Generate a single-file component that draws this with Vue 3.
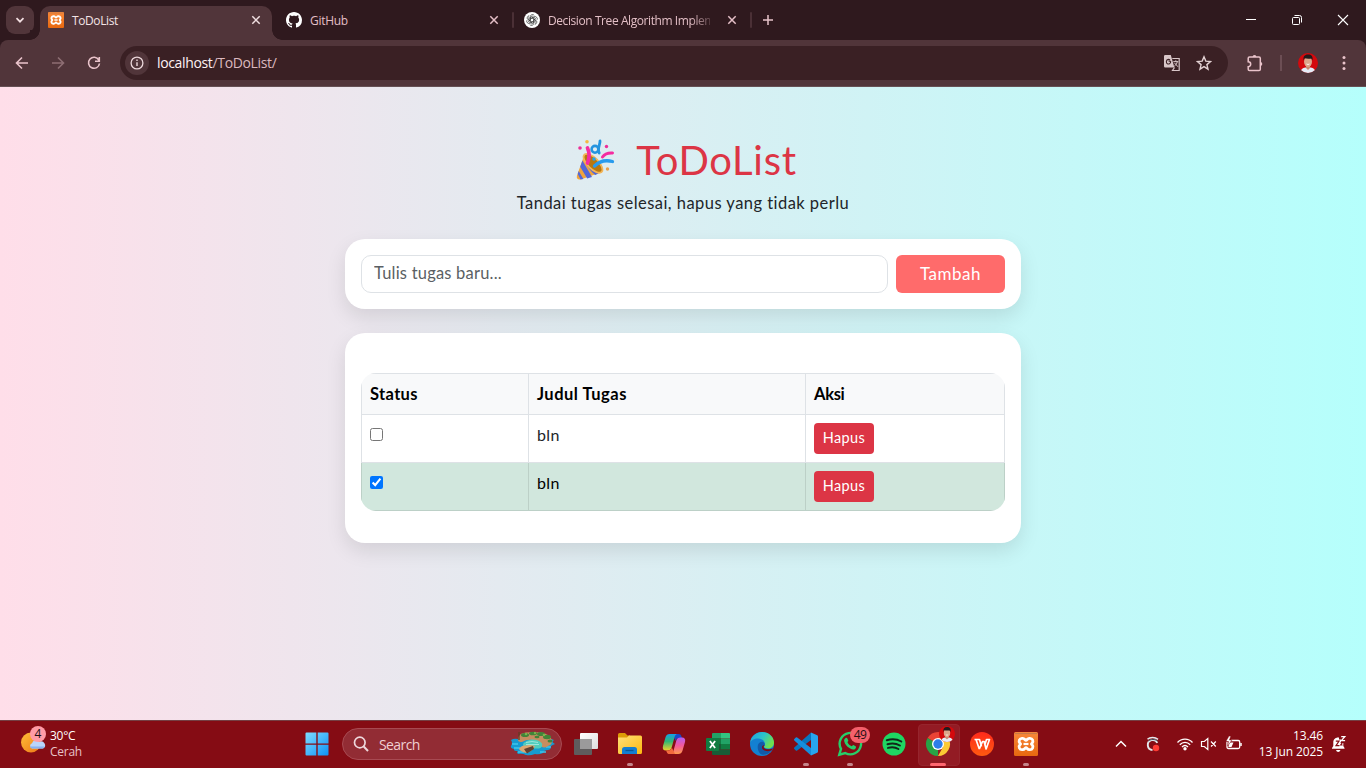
<script setup>
import { ref } from 'vue'

const draft = ref('')
const tasks = ref([
  { id: 1, title: 'bln', done: false },
  { id: 2, title: 'bln', done: true },
])
const remove = (id) => { tasks.value = tasks.value.filter((t) => t.id !== id) }
</script>

<template>
  <div class="screen">
    <svg class="defs" width="0" height="0">
      <defs>
        <linearGradient id="gWin" x1="0" y1="0" x2="1" y2="1"><stop offset="0" stop-color="#7fdcff" /><stop offset="1" stop-color="#0d92f5" /></linearGradient>
        <linearGradient id="gXampp" x1="0" y1="0" x2="0" y2="1"><stop offset="0" stop-color="#f9883a" /><stop offset="1" stop-color="#e8680f" /></linearGradient>
        <linearGradient id="gFolder" x1="0" y1="0" x2="1" y2="1"><stop offset="0" stop-color="#ffe07a" /><stop offset="1" stop-color="#fdb90f" /></linearGradient>
        <linearGradient id="gCopA" x1="0" y1="0" x2="0" y2="1"><stop offset="0" stop-color="#169fe6" /><stop offset=".45" stop-color="#2fb774" /><stop offset="1" stop-color="#f3d02c" /></linearGradient>
        <linearGradient id="gCopB" x1="0" y1="0" x2="0" y2="1"><stop offset="0" stop-color="#b65bf0" /><stop offset=".5" stop-color="#f3599b" /><stop offset="1" stop-color="#ff9a4b" /></linearGradient>
        <linearGradient id="gEdge" x1="0" y1="0" x2="1" y2=".5"><stop offset="0" stop-color="#1e9de4" /><stop offset=".55" stop-color="#2cc4c9" /><stop offset="1" stop-color="#6fe04d" /></linearGradient>
        <linearGradient id="gSun" x1="0" y1="0" x2="1" y2="1"><stop offset="0" stop-color="#ffbf38" /><stop offset="1" stop-color="#ee7617" /></linearGradient>
        <linearGradient id="gWps" x1="0" y1="0" x2="0" y2="1"><stop offset="0" stop-color="#ff2a1c" /><stop offset="1" stop-color="#ff5a10" /></linearGradient>
        <clipPath id="round20"><circle cx="10" cy="10" r="10" /></clipPath>
        <symbol id="xampp" viewBox="0 0 24 24">
          <rect width="24" height="24" rx="1.5" fill="url(#gXampp)" />
          <path d="M1 1.5h22" stroke="#c87a45" stroke-width="1.2" />
          <path d="M8 6.300h.8c1.800 0 2.200 2 3.200 2s1.400-2 3.200-2h.8a2.900 2.900 0 0 1 2.100 4.900l-.7.8.7.8a2.900 2.900 0 0 1-2.100 4.900h-.8c-1.800 0-2.200-2-3.200-2s-1.400 2-3.200 2H8a2.900 2.900 0 0 1-2.100-4.900l.7-.8-.7-.8A2.900 2.900 0 0 1 8 6.300z" fill="none" stroke="#fff" stroke-width="2.800" stroke-linejoin="round" />
          <path d="M9.500 12h5" stroke="#fff" stroke-width="2.200" />
        </symbol>
        <symbol id="face" viewBox="0 0 20 20">
          <g clip-path="url(#round20)">
            <rect width="20" height="20" fill="#d4090d" />
            <path d="M2.500 20c.3-4 2-5 4.800-5.600h5.400c2.800.6 4.500 1.600 4.800 5.600z" fill="#e6edf8" />
            <path d="M8 12h4v3l-2 2-2-2z" fill="#c98d70" />
            <ellipse cx="10" cy="8.800" rx="4" ry="5.200" fill="#dca68a" />
            <path d="M5.600 7.500C4.900 3.500 6.500 1.400 10 1.400s5.200 1.800 4.500 6.100l-1-2c-2 .3-5 .3-7-.2z" fill="#231b1c" />
            <path d="M8.500 11q1.500 1 3 0" stroke="#fff" stroke-width=".9" fill="none" />
          </g>
        </symbol>
      </defs>
    </svg>

    <header class="tabs">
      <button class="tabsearch"><svg width="10" height="10" viewBox="0 0 10 10"><path d="M1.500 3.200 5 6.700l3.500-3.500" fill="none" stroke="#f3dfe2" stroke-width="1.700" /></svg></button>
      <div class="tab active">
        <svg class="fav" width="16" height="16"><use href="#xampp" /></svg>
        <span class="title t1">ToDoList</span>
        <svg class="x" width="10" height="10" viewBox="0 0 10 10"><path d="M1.300 1.300l7.400 7.400M8.700 1.300 1.300 8.700" stroke="#f0dfe1" stroke-width="1.500" /></svg>
      </div>
      <div class="tab">
        <svg class="fav" width="16" height="16" viewBox="0 0 16 16"><path fill="#fff" d="M8 0C3.580 0 0 3.580 0 8c0 3.540 2.290 6.530 5.470 7.590.4.070.55-.17.55-.38 0-.19-.01-.82-.01-1.490-2.010.37-2.530-.49-2.690-.94-.09-.23-.48-.94-.82-1.130-.28-.15-.68-.52-.01-.53.63-.01 1.080.58 1.230.82.72 1.210 1.870.87 2.330.66.07-.52.28-.87.51-1.070-1.780-.2-3.640-.89-3.640-3.950 0-.87.31-1.590.82-2.150-.08-.2-.36-1.020.08-2.120 0 0 .67-.21 2.200.82.64-.18 1.320-.27 2-.27s1.360.09 2 .27c1.530-1.040 2.200-.82 2.200-.82.44 1.100.16 1.920.08 2.120.51.56.82 1.270.82 2.150 0 3.070-1.870 3.750-3.650 3.950.29.25.54.73.54 1.480 0 1.070-.01 1.930-.01 2.200 0 .21.15.46.55.38A8.010 8.010 0 0 0 16 8c0-4.420-3.580-8-8-8z" /></svg>
        <span class="title t2">GitHub</span>
        <svg class="x" width="10" height="10" viewBox="0 0 10 10"><path d="M1.300 1.300l7.400 7.400M8.700 1.300 1.300 8.700" stroke="#e5bfc7" stroke-width="1.500" /></svg>
      </div>
      <i class="sep"></i>
      <div class="tab">
        <svg class="fav" width="16" height="16" viewBox="0 0 16 16">
          <circle cx="8" cy="8" r="8" fill="#fff" />
          <g fill="none" stroke="#333" stroke-width=".7"><g v-for="n in 6" :key="n" :transform="`rotate(${n * 60} 8 8)`"><path d="M6.300 8V4.600A2.200 2.200 0 0 1 10.300 3.500M6.300 6.900l3-1.700 2.600 1.500" /></g></g>
        </svg>
        <span class="title t3">Decision Tree Algorithm Implem</span>
        <svg class="x" width="10" height="10" viewBox="0 0 10 10"><path d="M1.300 1.300l7.400 7.400M8.700 1.300 1.300 8.700" stroke="#e5bfc7" stroke-width="1.500" /></svg>
      </div>
      <i class="sep"></i>
      <svg class="plus" width="12" height="12" viewBox="0 0 12 12"><path d="M6 1v10M1 6h10" stroke="#e8c3ca" stroke-width="1.500" /></svg>
      <div class="winctl">
        <svg width="12" height="12" viewBox="0 0 12 12"><path d="M1 5.500h10" stroke="#fff" /></svg>
        <svg width="12" height="12" viewBox="0 0 12 12"><path d="M3.500 1.500h5a2 2 0 0 1 2 2v5" fill="none" stroke="#fff" /><rect x="1.500" y="3.500" width="7" height="7" rx="1" fill="none" stroke="#fff" /></svg>
        <svg width="12" height="12" viewBox="0 0 12 12"><path d="M1 1l10 10M11 1 1 11" stroke="#fff" stroke-width="1.100" /></svg>
      </div>
    </header>

    <nav class="toolbar">
      <svg class="nav" width="16" height="16" viewBox="0 0 16 16"><path d="M14 8H2.800M8 2.500 2.500 8 8 13.500" fill="none" stroke="#eac4cb" stroke-width="1.600" /></svg>
      <svg class="nav" width="16" height="16" viewBox="0 0 16 16"><path d="M2 8h11.200M8 2.500 13.500 8 8 13.500" fill="none" stroke="#8e6e73" stroke-width="1.600" /></svg>
      <svg class="nav" width="16" height="16" viewBox="0 0 16 16"><path d="M12.800 5A5.500 5.500 0 1 0 13.500 8.500M13.300 2v4.200H9" fill="none" stroke="#eac4cb" stroke-width="1.600" /></svg>
      <div class="omni">
        <span class="info"><svg width="14" height="14" viewBox="0 0 14 14"><circle cx="7" cy="7" r="5.900" fill="none" stroke="#ecd8db" stroke-width="1.300" /><path d="M7 6.200V10M7 3.600v1.500" stroke="#ecd8db" stroke-width="1.400" /></svg></span>
        <span class="url">localhost<em>/ToDoList/</em></span>
        <svg class="translate" width="18" height="18" viewBox="0 0 18 18">
          <path d="M2.200 1h5.600l3.600 12.500H2.200A1.200 1.200 0 0 1 1 12.300V2.200A1.200 1.200 0 0 1 2.200 1z" fill="#d8c6c8" />
          <path d="M7.900 7.200H5.600M7.700 7.200c0 2.500-1.800 3.200-3 2.700-2.100-.9-1.600-4.400.6-4.500.8 0 1.300.2 1.700.7" fill="none" stroke="#3b2024" stroke-width="1.100" />
          <path d="M9.300 4.500h6.900v12H9.500l2-3" fill="none" stroke="#d8c6c8" stroke-width="1.200" />
          <path d="M10.300 7.600h5M12.800 6.300v1.300M14.300 7.700c-.4 2-1.500 3.400-3 4.500M11.400 8.800l3.600 4" fill="none" stroke="#d8c6c8" stroke-width="1" />
        </svg>
        <svg class="star" width="16" height="16" viewBox="0 0 16 16"><path d="M8 1.800l1.800 4.300 4.700.4-3.600 3.100 1.100 4.600-4-2.500-4 2.500 1.100-4.600L1.500 6.500l4.700-.4z" fill="none" stroke="#e3d1d3" stroke-width="1.400" /></svg>
      </div>
      <svg class="puzzle" width="18" height="18" viewBox="0 0 18 18"><path d="M2.200 4.300q0-1.300 1.300-1.300H13q1.300 0 1.300 1.300v10.900q0 1.300-1.300 1.300H3.500q-1.300 0-1.300-1.300v-2.400a2.500 2.500 0 0 0 0-5z" fill="none" stroke="#eac4cb" stroke-width="1.500" /><path d="M6.600 3a1.900 1.900 0 0 1 3.800 0zM14.400 8a1.900 1.900 0 0 1 0 3.800z" fill="#eac4cb" /></svg>
      <i class="tsep"></i>
      <svg class="avatar" width="20" height="20"><use href="#face" /></svg>
      <svg class="dots" width="4" height="16" viewBox="0 0 4 16"><g fill="#eac4cb"><circle cx="2" cy="2.500" r="1.500" /><circle cx="2" cy="8" r="1.500" /><circle cx="2" cy="13.500" r="1.500" /></g></svg>
    </nav>

    <main class="page">
      <h1>
        <svg width="40" height="42" viewBox="0 0 40 42">
          <path d="M8.500 15.500 1 36.500c-.9 3 .9 4.600 3.600 4L26 33z" fill="#f1a43c" />
          <path d="M6.400 21.500 16 38l-4.800 1.500L4.200 27.700zM2.700 32l4.700 8-2.800.6L1.700 35zM9 16c2 6 7 13.500 13.500 18.400l-3.300 1.500C13.500 31.600 9.500 25.500 7.700 19.300z" fill="#5267d8" />
          <ellipse cx="17" cy="24.300" rx="12.200" ry="5.400" transform="rotate(45 17 24.300)" fill="#b8780f" />
          <ellipse cx="17" cy="24.300" rx="12.200" ry="5.400" transform="rotate(45 17 24.300)" fill="none" stroke="#f3b558" stroke-width="1.800" />
          <path d="M11.500 24c2-5 2.300-10 0-15" fill="none" stroke="#f52ca0" stroke-width="3.700" stroke-linecap="round" />
          <path d="M18.500 27c4.500-4.500 10-6.500 18-4.500" fill="none" stroke="#289bed" stroke-width="3.300" stroke-linecap="round" />
          <path d="M26.500 18c1.800-2.800 5-4.300 10-4" fill="none" stroke="#f52ca0" stroke-width="3" stroke-linecap="round" />
          <circle cx="19" cy="10.300" r="3.400" fill="none" stroke="#2494df" stroke-width="2.600" /><path d="M24 2c.2 3.500-3 8-.8 12" fill="none" stroke="#2494df" stroke-width="2.800" stroke-linecap="round" />
          <g fill="#ed2f98"><circle cx="4" cy="9" r="1.800" /><circle cx="30.500" cy="7.500" r="1.700" /></g>
          <circle cx="11" cy="2.800" r="1.800" fill="#f5b744" /><circle cx="31.500" cy="30" r="1.700" fill="#e9a04c" /><circle cx="18" cy="20" r="1.700" fill="#22a5ee" />
        </svg>
        <span>ToDoList</span>
      </h1>
      <p class="lead">Tandai tugas selesai, hapus yang tidak perlu</p>

      <section class="card form">
        <input v-model="draft" placeholder="Tulis tugas baru..." />
        <button class="add">Tambah</button>
      </section>

      <section class="card list">
        <table>
          <thead><tr><th>Status</th><th>Judul Tugas</th><th>Aksi</th></tr></thead>
          <tbody>
            <tr v-for="t in tasks" :key="t.id" :class="{ done: t.done }">
              <td><input v-model="t.done" type="checkbox" /></td>
              <td>{{ t.title }}</td>
              <td><button class="del" @click="remove(t.id)">Hapus</button></td>
            </tr>
          </tbody>
        </table>
      </section>
    </main>

    <footer class="taskbar">
      <div class="weather">
        <svg width="28" height="30" viewBox="0 0 28 30">
          <circle cx="11" cy="17.500" r="10" fill="url(#gSun)" />
          <path d="M12 23.500a2.800 2.800 0 0 1 0-5.300 4 4 0 0 1 7.200-1.200 3.300 3.300 0 0 1 4 6.500z" fill="#b9d4fa" /><path d="M12 23.500a2.800 2.800 0 0 1-2-2h14.500a3 3 0 0 1-2 2z" fill="#87b0ee" />
          <circle cx="18" cy="9" r="8" fill="#ff9ba6" />
        </svg>
        <b class="four">4</b>
        <div class="wtext"><span>30°C</span><span class="dim">Cerah</span></div>
      </div>
      <div class="apps">
        <div class="app"><svg width="24" height="24" viewBox="0 0 24 24"><path d="M.5 1.500q0-1 1-1h9.800v10.900H.5zM12.700.5h9.800q1 0 1 1v9.900H12.700zM.5 12.700h10.800v10.800H1.500q-1 0-1-1zM12.700 12.700h10.800v9.800q0 1-1 1h-9.800z" fill="url(#gWin)" /></svg></div>
        <div class="search">
          <svg width="16" height="16" viewBox="0 0 16 16"><circle cx="6.800" cy="6.500" r="5.300" fill="none" stroke="#eed8dc" stroke-width="1.700" /><path d="M10.700 10.500 15 15" stroke="#eed8dc" stroke-width="2" /></svg>
          <span>Search</span>
          <svg class="island" width="48" height="26" viewBox="0 0 48 26">
            <path d="M2 9q3-2 7-1h28q4-1 8 1-3 2 1 4-3 1-5 3 2 2-2 3-4 0-5 3-4 2-8 1-5 2-9 1-4-2-8-1-2-2 0-3-5 0-4-2-4-1-3-3 2-3 0-6z" fill="#159bd1" />
            <path d="M3 13h6M5 17h6M31 21h6M37 16h5M9 21h6" stroke="#3cc6eb" stroke-width="1.500" />
            <path d="M9 9q0-5 4-6.500 6-2 12-1 8-1 12 1.500 5 2 6 7 0 4-4 5-4 3-7 0-1-5-8-6-6-1-11 2-4 0-4-2z" fill="#c68d60" />
            <path d="M14 13q3-4 9-4.500 7 0 10 4 1 4-3 5H18q-4-1-4-4.500z" fill="#50cdbd" />
            <path d="M17 11.500q6-2 12 0M17 13.500h13" stroke="#9be6dc" stroke-width="1" fill="none" />
            <path d="M10 18q2-4 7-3.500 4-1 9 .5-2 5-8 7-6-1-8-4z" fill="#dba771" /><path d="M15 18l9-3 1 3-7 4.500z" fill="#5e4132" />
            <g fill="#418438"><ellipse cx="16" cy="4" rx="4" ry="2" /><ellipse cx="24" cy="2.500" rx="4" ry="1.800" /><ellipse cx="32" cy="3" rx="4" ry="2" /><ellipse cx="38" cy="6" rx="4" ry="2.200" /><ellipse cx="28" cy="6" rx="2.500" ry="1.300" /><ellipse cx="41" cy="10" rx="2.500" ry="1.500" /></g>
            <g fill="#77b44c"><circle cx="17" cy="3" r="1.300" /><circle cx="26" cy="2" r="1.200" /><circle cx="35" cy="4" r="1.300" /></g>
            <path d="M10 1v8" stroke="#613c22" stroke-width="1.300" />
          </svg>
        </div>
        <div class="app"><svg width="26" height="24" viewBox="0 0 26 24"><defs><linearGradient id="gTv" x1="0" y1="0" x2="1" y2="1"><stop offset="0" stop-color="#fff" /><stop offset="1" stop-color="#ddd" /></linearGradient></defs><rect x="1" y="7" width="18" height="16" rx="1" fill="#5f5c5d" /><rect x="7" y="1" width="18" height="16" rx="1" fill="url(#gTv)" /><path d="M7 7h12v10H7z" fill="#9b9a9b" /></svg></div>
        <div class="app run"><svg width="24" height="24" viewBox="0 0 24 24"><path d="M0 2.500Q0 1 1.500 1H7l2.500 2.500H12V8H0z" fill="#dd9b07" /><path d="M0 5.500h9l2-2h11.500Q24 3.500 24 5v15.500q0 1.500-1.500 1.500h-21Q0 22 0 20.500z" fill="url(#gFolder)" /><path d="M4 22v-4.500Q4 15 6.500 15h10q2.500 0 2.500 2.500V22z" fill="#147ed1" /><path d="M7.500 18.500h8" stroke="#0b5695" stroke-width="1.300" /></svg></div>
        <div class="app"><svg width="24" height="24" viewBox="0 0 24 24">
          <path d="M11 2h5.500c1.600 0 2.400.8 2.900 2.300L20 6h-3c-2 0-3 1-3.600 3z" fill="#1848c9" />
          <path d="M7.700 2H15c-1.400.5-2 1.500-2.500 3.200L9.800 15c-.7 2.600-2 3.500-4.300 3.500H4c-2.500 0-3.800-1.500-3-4.600L3.600 5C4.300 2.900 5.500 2 7.700 2z" fill="url(#gCopA)" />
          <path d="M16.300 22H9c1.400-.5 2-1.500 2.500-3.200L14.200 9c.7-2.600 2-3.500 4.300-3.500H20c2.500 0 3.800 1.500 3 4.600L20.400 19c-.7 2.100-1.900 3-4.100 3z" fill="url(#gCopB)" />
          <path d="M13 22H7.500c-1.600 0-2.400-.8-2.900-2.300L4.200 18.500h2c2 0 3-1 3.600-3z" fill="#f46a3d" />
        </svg></div>
        <div class="app"><svg class="xl" width="24" height="24" viewBox="0 0 24 24"><path d="M6 2q0-1 1-1h8v5.500H6z" fill="#21a366" /><path d="M15 1h8q1 0 1 1v4.500h-9z" fill="#33c481" /><path d="M6 6.500h9V12H6z" fill="#107c41" /><path d="M15 6.500h9V12h-9z" fill="#21a366" /><path d="M6 12h9v5.500H6z" fill="#185c37" /><path d="M15 12h9v5.500h-9z" fill="#107c41" /><path d="M6 17.500h18V22q0 1-1 1H7q-1 0-1-1z" fill="#185c37" /><rect y="6" width="13" height="13" rx="1" fill="#107c41" /><path d="M3.900 9l5.200 7M9.100 9l-5.200 7" stroke="#fff" stroke-width="1.800" /></svg></div>
        <div class="app"><svg width="26" height="26" viewBox="0 0 26 26">
          <circle cx="13" cy="13" r="12" fill="#1380d1" />
          <path d="M1 12C2 5 7 1 13 1c7 0 12 5 12 10.500 0 4-3 6-6 6-2.300 0-4-.7-4-1.700 0-.7 1-1.100 1-2.800 0-3-3.200-5.500-7-5.500-4 0-7.300 2-8 4.500z" fill="url(#gEdge)" />
          <path d="M8.700 16c0-4 2.800-5.300 4.800-5.300 1.500.5 2.300 1.500 2.300 2.800 0 1-.9 1.600-.9 2.400 0 1.200 2 2.200 4.600 2.200 2 0 3.300-.5 4.300-1.100-1.700 4.500-6 7-10 6.700-3-.4-5.100-3.700-5.100-7.700z" fill="#125aa9" />
          <path d="M15.500 14c-.8 1-1.200 1.500-.9 2.400 1 2.200 6.500 2.600 9.300.8l-.5 1.500c-4 2.800-10.400 1.300-10.400-2.400 0-1 .8-2 2.500-2.300z" fill="#850a13" />
        </svg></div>
        <div class="app run"><svg width="26" height="26" viewBox="0 0 26 26"><path d="M18 1.500l6.200 2.800q.8.400.8 1.200v15q0 .8-.8 1.200L18 24.500z" fill="#28a4ee" /><path d="M18 1.500 1.300 16.600q-.8.700 0 1.500l1.500 1.400q.7.500 1.400 0L18 9z" fill="#0875be" /><path d="M18 24.500 1.300 9.400q-.8-.7 0-1.500l1.500-1.400q.7-.5 1.400 0L18 17z" fill="#168ddd" /></svg></div>
        <div class="app run"><svg width="26" height="26" viewBox="0 0 26 26"><path d="M2.300 23.700 4 17.800A10.700 10.700 0 1 1 8.200 22z" fill="none" stroke="#27ce69" stroke-width="2.400" /><path d="M8.400 7.300c.7-.7 1.600-.6 2 .3l.9 2c.2.500-.8 1.300-.8 1.700.7 1.800 2.400 3.300 4.200 3.900.5 0 1.300-1.300 1.700-1.100l2.200 1.100c.8.400.4 2.100-.5 2.700-3.500 2.300-11-3.600-11-8.600 0-.8.600-1.400 1.300-2z" fill="#27ce69" /></svg><b class="badge">49</b></div>
        <div class="app"><svg width="24" height="24" viewBox="0 0 24 24"><circle cx="12" cy="12" r="11.500" fill="#1fd662" /><path d="M4.800 8.200c5-1.400 10.400-1 14.500 1.300M5.500 12.200c4.500-1.300 8.800-.8 12.400 1.300M6 15.900c3.700-1 7.400-.7 10.400 1.100" fill="none" stroke="#11271a" stroke-width="2" stroke-linecap="round" /></svg></div>
        <div class="app current"><svg width="26" height="26" viewBox="0 0 26 26"><path d="M13 13 2.600 7A12 12 0 0 1 23.400 7z" fill="#ea4335" /><path d="M13 13 13 25A12 12 0 0 1 2.600 7z" fill="#28a246" /><path d="M18 16l-5 9a12 12 0 0 0 10.400-18H13z" fill="#fcc934" /><circle cx="13" cy="13" r="6" fill="#fff" /><circle cx="13" cy="13" r="4.700" fill="#2d7de9" /></svg><svg class="mini" width="16" height="16"><use href="#face" /></svg></div>
        <div class="app"><svg width="24" height="24" viewBox="0 0 24 24"><circle cx="12" cy="12" r="12" fill="url(#gWps)" /><path d="M4.500 7.500h5l2 7M9.300 17 6 7.500M9.300 17l3.200-7.500h1.600l2 7.500 3.400-9.500h-3l-1.800 6" fill="none" stroke="#fff" stroke-width="1.700" stroke-linejoin="round" /></svg></div>
        <div class="app run"><svg width="24" height="24"><use href="#xampp" /></svg></div>
      </div>
      <div class="tray">
        <svg class="up" width="12" height="8" viewBox="0 0 12 8"><path d="M1 6.500 6 1.500l5 5" fill="none" stroke="#fff" stroke-width="1.500" /></svg>
        <svg class="sync" width="16" height="16" viewBox="0 0 16 16"><path d="M2.500 3.300C5 .8 10 .8 13 3.300" fill="none" stroke="#e3e8ec" stroke-width="1.500" /><path d="M12.300 6.800A5 5 0 1 0 7.500 14" fill="none" stroke="#e3e8ec" stroke-width="1.900" /><path d="M3.500 5c2.300-2 6.500-2 9 0" fill="none" stroke="#36444f" stroke-width="1" /><circle cx="11" cy="12" r="3.200" fill="#ff3b34" /></svg>
        <svg class="wifi" width="18" height="16" viewBox="0 0 18 16"><g fill="none" stroke="#fff" stroke-width="1.300"><path d="M1.500 6.500c4-4.500 11-4.500 15 0M3.800 8.800c3-3.200 7.400-3.200 10.400 0M6 11c2-2 4-2 6 0" /></g><circle cx="9" cy="12.700" r="1.700" fill="#fff" /></svg>
        <svg class="vol" width="17" height="14" viewBox="0 0 17 14"><path d="M1.500 4.500h2.800l3.500-3v11l-3.500-3H1.500zM11 4.500l4.800 5M15.800 4.500l-4.800 5" fill="none" stroke="#fff" stroke-width="1.200" /></svg>
        <svg class="bat" width="18" height="16" viewBox="0 0 18 16"><path d="M6 4.500h7.200q1.500 0 1.500 1.500v5q0 1.500-1.500 1.500H3.500Q2 12.500 2 11V6" fill="none" stroke="#fff" stroke-width="1.300" /><path d="M16 7v3" stroke="#fff" stroke-width="1.500" /><path d="M3.500 6.500h5l-2 4.500h-3z" fill="#fff" /><path d="M4 0 .8 5.500h2.700L2.700 10 7 4H4.500L5.800 0z" fill="#fff" stroke="#850a13" stroke-width=".5" /></svg>
        <div class="clock"><span>13.46</span><span class="date">13 Jun 2025</span></div>
        <svg class="bell" width="16" height="18" viewBox="0 0 16 18"><path d="M8 2.500C4.500 2 2.300 4.500 2.300 7v4L1 13v.8h12.500V13l-1.200-2V8H10V4.500H8zM5 15h4.500q-.7 2-2.300 2T5 15z" fill="#fff" /><path d="M10.200 1.600h3.600l-3.400 4h3.700" fill="none" stroke="#fff" stroke-width="1.300" /><path d="M4.800 6.200H8L5 10.600h3.400M9.600 7.500h1.800l-1.700 2.500h1.900" fill="none" stroke="#850a13" stroke-width="1.200" /></svg>
      </div>
    </footer>
  </div>
</template>

<style>
html, body { margin: 0; overflow: hidden; }
</style>

<style scoped>
* { box-sizing: border-box; }
.screen { width: 1366px; height: 768px; overflow: hidden; display: flex; flex-direction: column; background: #2f191e; font-family: "Open Sans", sans-serif; }
.defs { position: absolute; }
svg { display: block; flex: none; }
button { border: 0; padding: 0; font: inherit; }

.tabs { height: 40px; display: flex; align-items: center; flex: none; }
.tabsearch { width: 28px; height: 28px; margin: 0 6px; border-radius: 9px; background: #51353a; display: grid; place-items: center; }
.tab { width: 232px; height: 34px; margin-top: 6px; padding: 0 11px 6px 8px; display: flex; align-items: center; position: relative; flex: none; }
.tab + .tab { margin-left: 6px; }
.active { background: #51353a; border-radius: 10px 10px 0 0; }
.active::before, .active::after { content: ""; position: absolute; bottom: 0; width: 10px; height: 10px; }
.active::before { left: -10px; background: radial-gradient(circle at 0 0, #2f191e 9.500px, #51353a 10px); }
.active::after { right: -10px; background: radial-gradient(circle at 100% 0, #2f191e 9.500px, #51353a 10px); }
.title { flex: 1; min-width: 0; white-space: nowrap; margin: 1px 17px 0 8px; font-size: 12px; line-height: 18px; color: #e3bfc6; letter-spacing: -.4px; }
.t1 { color: #f3e4e6; }
.t2 { letter-spacing: -.3px; }
.t3 { mask-image: linear-gradient(90deg, #000 142px, transparent 169px); letter-spacing: -.42px; }
.tab + .sep { margin-left: 2px; }
.sep { width: 2px; height: 16px; background: #4b3036; border-radius: 1px; flex: none; }
.sep + .tab { margin-left: 2px; }
.plus { margin-left: 10px; }
.winctl { margin-left: auto; display: flex; gap: 34px; padding-right: 17px; }

.toolbar { height: 47px; padding: 0 0 1px 14px; background: #51353a; display: flex; align-items: center; flex: none; border-bottom: 1px solid #655054; border-radius: 8px 8px 0 0; }
.nav { margin-right: 20px; }
.omni { width: 1108px; height: 34px; margin-left: -2px; border-radius: 17px; background: #3a2024; display: flex; align-items: center; padding: 0 16px 0 5px; }
.info { width: 24px; height: 24px; border-radius: 12px; background: #51353a; display: grid; place-items: center; }
.url { margin-left: 8px; color: #fff3f4; font-size: 14px; line-height: 20px; letter-spacing: -.35px; }
.url em { font-style: normal; color: #dcb9bf; }
.translate { margin-left: auto; }
.star { margin-left: 15px; }
.puzzle { margin-left: 18px; }
.tsep { width: 2px; height: 16px; background: #6c4e54; margin: 0 17px 0 16px; }
.avatar { margin-left: -1px; }
.dots { margin-left: 24px; }

.page { flex: 1; background: linear-gradient(90deg, #ffdee9, #b5fffc); display: flex; flex-direction: column; align-items: center; font-family: Lato, sans-serif; color: #212529; }
h1 { margin: 49px 0 0; padding-left: 7px; height: 48px; display: flex; align-items: center; font-weight: 400; font-size: 40px; line-height: 48px; color: #dc3545; }
h1 span { margin-left: 20px; letter-spacing: .7px; }
.lead { margin: 7px 0 24px; font-size: 16.500px; line-height: 24px; letter-spacing: .46px; white-space: nowrap; }
.card { width: 676px; background: #fff; border-radius: 20px; box-shadow: 0 8px 20px rgba(0, 0, 0, .1); }
.form { height: 70px; padding: 16px; display: flex; gap: 8px; }
.form input { width: 527px; height: 38px; border: 1px solid #dee2e6; border-radius: 10px; padding: 0 12px 2px; font: 16.500px Lato, sans-serif; letter-spacing: .2px; outline: 0; }
.form input::placeholder { color: #5a5f64; opacity: 1; }
.add { width: 109px; height: 38px; padding-bottom: 2px; background: #ff6b6b; color: #fff; border-radius: 6px; font-size: 17px; letter-spacing: .5px; }
.list { margin-top: 24px; height: 210px; padding: 40px 16px 32px; }
table { width: 644px; table-layout: fixed; border-collapse: separate; border-spacing: 0; border-radius: 15px; overflow: hidden; font-size: 16px; letter-spacing: .4px; }
th, td { text-align: left; padding: 8px; border: solid #dee2e6; border-width: 0 1px 1px 0; line-height: 24px; vertical-align: top; }
th { height: 42px; border-top-width: 1px; background: #f8f9fa; color: #000; font-weight: 700; font-size: 16.500px; letter-spacing: .35px; }
th:first-child { width: 168px; }
th:nth-child(2) { width: 277px; letter-spacing: .5px; }
th:nth-child(3) { letter-spacing: -.3px; }
th:first-child, td:first-child { border-left-width: 1px; }
td { height: 48px; }
.done td { background: #d1e7dd; border-color: #bcd0c7; color: #000; }
td input { display: block; width: 13px; height: 13px; margin: 5px 0 0; }
.del { display: block; width: 60px; height: 31px; padding-bottom: 2px; border-radius: 4px; background: #dc3545; color: #fff; font-size: 14.500px; letter-spacing: .35px; }

.taskbar { height: 48px; flex: none; background: #850c14; border-top: 1px solid #754044; display: flex; color: #fff; font-size: 12px; }
.weather { width: 295px; padding: 4px 0 0 20px; display: flex; position: relative; }
.four { position: absolute; left: 30px; top: 5px; width: 16px; text-align: center; color: #1f1214; font-weight: 400; font-size: 12px; line-height: 16px; }
.wtext { margin-left: 2px; padding-top: 3px; display: flex; flex-direction: column; line-height: 16px; letter-spacing: -.25px; }
.dim { color: #e7c3c7; }
.apps { display: flex; align-items: center; padding-bottom: 1px; }
.app { width: 44px; height: 46px; display: grid; place-items: center; position: relative; }
.search { width: 220px; height: 32px; margin: 0 2px 0 3px; border: 1px solid #a84a52; border-radius: 16px; background: #922c34; display: flex; align-items: center; padding: 0 4px 0 10px; font-size: 14px; color: #efcfd2; letter-spacing: -.6px; }
.search span { margin-left: 10px; }
.island { margin-left: auto; }
.run::after { content: ""; position: absolute; bottom: 1px; left: 19px; width: 6px; height: 3px; border-radius: 2px; background: #c58489; }
.current::before { content: ""; position: absolute; left: 2px; top: 3px; width: 40px; height: 40px; border-radius: 4px; border: 1px solid #96252d; background: #931b24; }
.current > svg { position: relative; }
.current::after { content: ""; position: absolute; bottom: 1px; left: 14px; width: 16px; height: 3px; border-radius: 2px; background: #ff6770; }
.current > .mini { position: absolute; right: 5px; top: 5px; }
.badge { position: absolute; left: 22px; top: 6px; width: 20px; height: 16px; border-radius: 8px; background: #f4606b; color: #260f12; font-size: 12px; line-height: 16px; font-weight: 400; text-align: center; letter-spacing: -.6px; }
.tray { margin-left: auto; display: flex; align-items: center; padding: 0 19px 2px 0; }
.sync { margin-left: 18px; }
.wifi { margin-left: 15px; }
.vol { margin-left: 6px; }
.bat { margin-left: 8px; }
.clock { width: 80px; display: flex; flex-direction: column; text-align: right; line-height: 16px; white-space: nowrap; letter-spacing: -.1px; }
.bell { margin-left: 8px; }
</style>
